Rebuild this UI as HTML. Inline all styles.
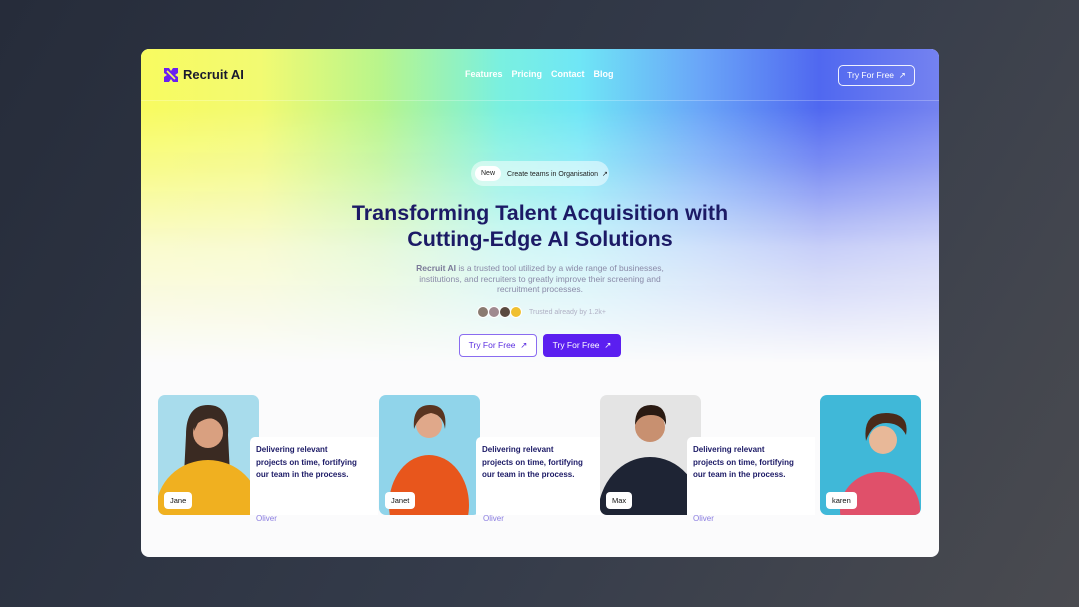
<!DOCTYPE html>
<html><head><meta charset="utf-8">
<style>
*{margin:0;padding:0;box-sizing:border-box}
html,body{width:1079px;height:607px;overflow:hidden}
body{background:linear-gradient(120deg,#262c3a 0%,#343b4a 55%,#4a4b50 100%);font-family:"Liberation Sans",sans-serif;position:relative}
.card{position:absolute;left:141px;top:49px;width:798px;height:508px;border-radius:8px;overflow:hidden;background:#fbfbfc}
.grad{position:absolute;left:0;top:0;width:100%;height:330px;
background:linear-gradient(90deg,#f8fb60 0%,#f2fa72 15%,#b8f58c 30%,#7af0e0 45%,#6fe6f6 55%,#6aa6f8 70%,#5068f0 85%,#7482f0 100%);
-webkit-mask-image:linear-gradient(180deg,#000 0%,#000 18%,rgba(0,0,0,.75) 35%,rgba(0,0,0,.3) 60%,transparent 95%);
mask-image:linear-gradient(180deg,#000 0%,#000 18%,rgba(0,0,0,.75) 35%,rgba(0,0,0,.3) 60%,transparent 95%)}
.navline{position:absolute;left:0;top:51px;width:100%;height:1px;background:rgba(255,255,255,.25)}
.logo{position:absolute;left:23px;top:18px;display:flex;align-items:center;gap:5px;font-weight:bold;font-size:13px;color:#1a1a2e}
.nav{position:absolute;left:324px;top:20px;display:flex;gap:9px;font-size:9px;color:#fff;font-weight:bold}
.tbtn{position:absolute;left:697px;top:16px;width:77px;height:21px;border:1px solid rgba(255,255,255,.9);border-radius:5px;color:#fff;font-size:8.5px;display:flex;align-items:center;justify-content:center}
.pill{position:absolute;left:330px;top:112px;width:138px;height:25px;border-radius:13px;background:rgba(255,255,255,.5);font-size:7px;color:#222;display:flex;align-items:center;padding-left:4px;gap:6px}
.pill .n{background:#fff;border-radius:10px;padding:4px 6px}
h1{position:absolute;left:0;width:100%;top:151px;text-align:center;color:#1c1a66;font-size:21.5px;line-height:26px;font-weight:bold}
.desc{position:absolute;left:0;width:100%;top:214px;text-align:center;color:#8a8aa8;font-size:8.5px;line-height:10.5px}
.desc b{color:#7a7a98}
.trust{position:absolute;left:336px;top:257px;display:flex;align-items:center;gap:4px;font-size:7px;color:#b0b0c4}
.av{width:12px;height:12px;border-radius:50%;margin-right:-5px;border:1px solid #fff}
.b1,.b2{position:absolute;top:285px;height:23px;border-radius:4px;font-size:8.5px;display:flex;align-items:center;justify-content:center}
.b1{left:318px;width:78px;border:1px solid #8a6cf0;color:#5b2fe0;background:#fff}
.b2{left:402px;width:78px;background:#5b1ff0;color:#fff}
.ph{position:absolute;top:346px;width:101px;height:120px;border-radius:7px;overflow:hidden}
.tag{position:absolute;left:6px;bottom:6px;background:#fff;border-radius:4px;font-size:7.5px;color:#111;padding:4px 6px}
.q{position:absolute;top:388px;width:128px;height:78px;background:#fff;border-radius:5px 0 0 0;padding:7px 6px;font-size:8px;line-height:12.5px;color:#1c1a66;font-weight:bold}
.ol{position:absolute;top:465px;font-size:8px;color:#8a7ce0}
</style></head><body>
<div class="card">
<div class="grad"></div>
<div class="navline"></div>
<div class="logo"><svg width="14" height="14" viewBox="0 0 14 14"><path d="M0 0h5l2 3 2-3h5v5l-3 2 3 2v5H9L7 11 5 14H0V9l3-2-3-2z" fill="#6a1ff0"/><path d="M3 3l8 8" stroke="#f8fb60" stroke-width="1.6"/></svg>Recruit AI</div>
<div class="nav"><span>Features</span><span>Pricing</span><span>Contact</span><span>Blog</span></div>
<div class="tbtn">Try For Free &nbsp;↗</div>
<div class="pill"><span class="n">New</span><span>Create teams in Organisation &nbsp;↗</span></div>
<h1>Transforming Talent Acquisition with<br>Cutting-Edge AI Solutions</h1>
<div class="desc"><b>Recruit AI</b> is a trusted tool utilized by a wide range of businesses,<br>institutions, and recruiters to greatly improve their screening and<br>recruitment processes.</div>
<div class="trust"><span class="av" style="background:#8a7a70"></span><span class="av" style="background:#a08a90"></span><span class="av" style="background:#5a4a40"></span><span class="av" style="background:#f0c030;margin-right:3px"></span>Trusted already by 1.2k+</div>
<div class="b1">Try For Free &nbsp;↗</div>
<div class="b2">Try For Free &nbsp;↗</div>

<div class="ph" style="left:17px"><svg width="101" height="120"><rect width="101" height="120" fill="#a8dcec"/><path d="M28 40q0-30 22-30t20 30l2 40h-46z" fill="#3a2a22"/><ellipse cx="50" cy="115" rx="52" ry="50" fill="#f0b020"/><circle cx="50" cy="38" r="15" fill="#d9a080"/><path d="M36 36q0-22 16-22t14 22l-4-10q-10-6-22 2z" fill="#3a2a22"/></svg><div class="tag">Jane</div></div>
<div class="q" style="left:109px">Delivering relevant<br>projects on time, fortifying<br>our team in the process.</div>
<div class="ol" style="left:115px">Oliver</div>

<div class="ph" style="left:238px"><svg width="101" height="120"><rect width="101" height="120" fill="#90d4ea"/><ellipse cx="50" cy="110" rx="40" ry="50" fill="#e8561c"/><circle cx="50" cy="30" r="13" fill="#e0a88a"/><path d="M35 34q-2-24 16-24t15 24q-2-14-14-16-12 2-17 16z" fill="#5a3420"/></svg><div class="tag">Janet</div></div>
<div class="q" style="left:335px">Delivering relevant<br>projects on time, fortifying<br>our team in the process.</div>
<div class="ol" style="left:342px">Oliver</div>

<div class="ph" style="left:459px"><svg width="101" height="120"><rect width="101" height="120" fill="#e4e4e4"/><ellipse cx="50" cy="120" rx="52" ry="58" fill="#1e2434"/><circle cx="50" cy="32" r="15" fill="#c89070"/><path d="M35 30q0-20 16-20t15 20q-3-10-15-10t-16 10z" fill="#2a1a12"/></svg><div class="tag">Max</div></div>
<div class="q" style="left:546px">Delivering relevant<br>projects on time, fortifying<br>our team in the process.</div>
<div class="ol" style="left:552px">Oliver</div>

<div class="ph" style="left:679px"><svg width="101" height="120"><rect width="101" height="120" fill="#40b8d8"/><ellipse cx="60" cy="115" rx="40" ry="38" fill="#e0506a"/><circle cx="63" cy="45" r="14" fill="#e8b898"/><path d="M46 46q-4-28 20-28t20 22q-6-12-20-12-14 0-20 18z" fill="#4a2a1a"/></svg><div class="tag">karen</div></div>
</div>
</body></html>
